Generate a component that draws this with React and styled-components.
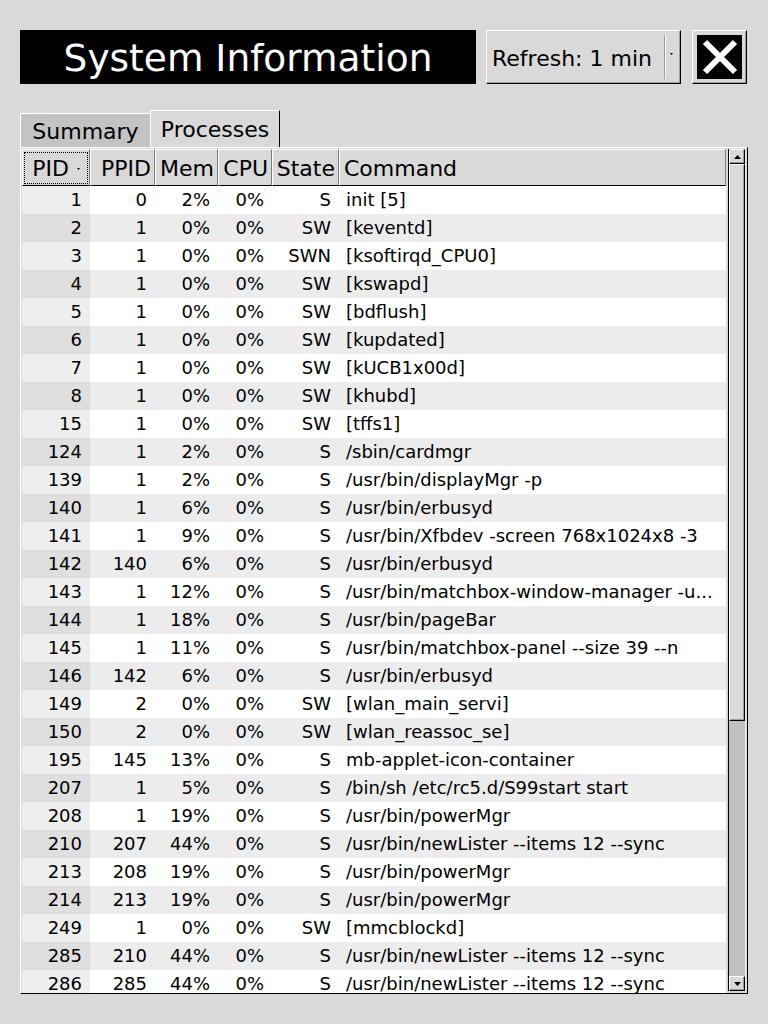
import React from "react";
import styled, { createGlobalStyle } from "styled-components";

const Global = createGlobalStyle`
  html, body { margin: 0; padding: 0; background: #d9d9d9; }
  body { font-family: "DejaVu Sans", "Liberation Sans", sans-serif; color: #000; }
`;

const Page = styled.div`
  width: 768px;
  height: 1024px;
  box-sizing: border-box;
  padding: 30px 20px 0 20px;
  display: flex;
  flex-direction: column;
`;

const TopBar = styled.div`
  display: flex;
  height: 54px;
  gap: 10px;
`;

const Title = styled.div`
  width: 456px;
  background: #000;
  color: #fff;
  font-size: 37.5px;
  display: flex;
  align-items: center;
  justify-content: center;
  padding-top: 2px;
  box-sizing: border-box;
`;

const Bevel = `
  box-sizing: border-box;
  border-style: solid;
  border-width: 1px;
  border-color: #fff #000 #000 #fff;
  box-shadow: inset -1px -1px 0 #9a9a9a;
`;

const Select = styled.div`
  ${Bevel}
  width: 195px;
  background: #d9d9d9;
  display: flex;
  align-items: center;
  font-size: 22px;
  padding-left: 5px;
  position: relative;
`;

const SelectLabel = styled.span`
  flex: 1;
  padding-top: 2px;
`;

const SelectSep = styled.div`
  width: 1px;
  height: 44px;
  background: #9a9a9a;
  border-right: 1px solid #fff;
  margin-right: 4px;
`;

const SelectArrow = styled.svg`
  width: 3px;
  height: 2px;
  margin-right: 7px;
  margin-bottom: 7px;
`;

const CloseBtn = styled.div`
  ${Bevel}
  width: 55px;
  margin-left: 1px;
  background: #d9d9d9;
  padding: 4px 4px 4px 4px;
`;

const CloseInner = styled.div`
  width: 100%;
  height: 100%;
  background: #000;
  display: flex;
  align-items: center;
  justify-content: center;
`;

const TabBar = styled.div`
  margin-top: 26px;
  height: 37px;
  display: flex;
  align-items: flex-end;
`;

const Tab = styled.div`
  box-sizing: border-box;
  width: 130px;
  height: ${(p) => (p.$active ? "37px" : "34px")};
  background: ${(p) => (p.$active ? "#d9d9d9" : "#c3c3c3")};
  border-top: 1px solid #fff;
  border-left: 1px solid #fff;
  border-right: ${(p) => (p.$active ? "1px solid #000" : "none")};
  font-size: 22px;
  display: flex;
  align-items: center;
  justify-content: center;
  padding-bottom: ${(p) => (p.$active ? "0" : "0")};
  padding-top: ${(p) => (p.$active ? "1px" : "1px")};
`;

const Frame = styled.div`
  box-sizing: border-box;
  width: 728px;
  height: 847px;
  border-style: solid;
  border-width: 1px;
  border-color: #fff #000 #000 #fff;
  padding: 1px 1px 0 1px;
  display: flex;
  background: #d9d9d9;
`;

const TableArea = styled.div`
  flex: 1;
  overflow: hidden;
  display: flex;
  flex-direction: column;
  margin-right: 2px;
`;

const cols = "68px 65px 63px 54px 67px 1fr";

const HeaderRow = styled.div`
  display: grid;
  grid-template-columns: ${cols};
  height: 37px;
  flex-shrink: 0;
`;

const HeaderCell = styled.div`
  box-sizing: border-box;
  border-style: solid;
  border-width: 1px;
  border-color: #fff #7a7a7a #000 #fff;
  background: #d9d9d9;
  font-size: 22px;
  display: flex;
  align-items: center;
  justify-content: ${(p) => (p.$left ? "flex-start" : "flex-end")};
  padding: ${(p) => (p.$left ? "1px 0 0 4px" : "1px 3px 0 0")};
  white-space: nowrap;
  position: relative;
`;

const FocusRing = styled.div`
  position: absolute;
  left: 1px;
  top: 2px;
  right: 1px;
  bottom: 1px;
  border: 1px dotted #000;
  pointer-events: none;
`;

const SortDot = styled.svg`
  width: 3px;
  height: 2px;
  margin-left: 8px;
  margin-right: 6px;
  margin-top: 2px;
`;

const Body = styled.div`
  flex: 1;
  overflow: hidden;
`;

const Row = styled.div`
  display: grid;
  grid-template-columns: ${cols};
  height: 28px;
  background: ${(p) => (p.$odd ? "#ececec" : "#ffffff")};
  font-size: 18px;
  line-height: 28px;
`;

const Cell = styled.div`
  text-align: right;
  padding-right: 8px;
  white-space: nowrap;
  background: ${(p) => (p.$sorted ? (p.$odd ? "#dfdfdf" : "#eeeeee") : "transparent")};
`;

const CmdCell = styled.div`
  padding-left: 7px;
  white-space: nowrap;
  overflow: hidden;
  text-overflow: ellipsis;
`;

const Scrollbar = styled.div`
  width: 16px;
  display: flex;
  flex-direction: column;
  border-left: 1px solid #000;
  border-right: 1px solid #eaeaea;
  background: #c0c0c0;
  margin-bottom: 2px;
`;

const ScrollBtn = styled.div`
  ${Bevel}
  height: 15px;
  background: #d9d9d9;
  display: flex;
  align-items: center;
  justify-content: center;
  flex-shrink: 0;
`;

const Thumb = styled.div`
  ${Bevel}
  height: 557px;
  background: #d9d9d9;
  flex-shrink: 0;
`;

const Track = styled.div`
  flex: 1;
`;

const rows = [
  [1, 0, "2%", "0%", "S", "init [5]"],
  [2, 1, "0%", "0%", "SW", "[keventd]"],
  [3, 1, "0%", "0%", "SWN", "[ksoftirqd_CPU0]"],
  [4, 1, "0%", "0%", "SW", "[kswapd]"],
  [5, 1, "0%", "0%", "SW", "[bdflush]"],
  [6, 1, "0%", "0%", "SW", "[kupdated]"],
  [7, 1, "0%", "0%", "SW", "[kUCB1x00d]"],
  [8, 1, "0%", "0%", "SW", "[khubd]"],
  [15, 1, "0%", "0%", "SW", "[tffs1]"],
  [124, 1, "2%", "0%", "S", "/sbin/cardmgr"],
  [139, 1, "2%", "0%", "S", "/usr/bin/displayMgr -p"],
  [140, 1, "6%", "0%", "S", "/usr/bin/erbusyd"],
  [141, 1, "9%", "0%", "S", "/usr/bin/Xfbdev -screen 768x1024x8 -3"],
  [142, 140, "6%", "0%", "S", "/usr/bin/erbusyd"],
  [143, 1, "12%", "0%", "S", "/usr/bin/matchbox-window-manager -u..."],
  [144, 1, "18%", "0%", "S", "/usr/bin/pageBar"],
  [145, 1, "11%", "0%", "S", "/usr/bin/matchbox-panel --size 39 --n"],
  [146, 142, "6%", "0%", "S", "/usr/bin/erbusyd"],
  [149, 2, "0%", "0%", "SW", "[wlan_main_servi]"],
  [150, 2, "0%", "0%", "SW", "[wlan_reassoc_se]"],
  [195, 145, "13%", "0%", "S", "mb-applet-icon-container"],
  [207, 1, "5%", "0%", "S", "/bin/sh /etc/rc5.d/S99start start"],
  [208, 1, "19%", "0%", "S", "/usr/bin/powerMgr"],
  [210, 207, "44%", "0%", "S", "/usr/bin/newLister --items 12 --sync"],
  [213, 208, "19%", "0%", "S", "/usr/bin/powerMgr"],
  [214, 213, "19%", "0%", "S", "/usr/bin/powerMgr"],
  [249, 1, "0%", "0%", "SW", "[mmcblockd]"],
  [285, 210, "44%", "0%", "S", "/usr/bin/newLister --items 12 --sync"],
  [286, 285, "44%", "0%", "S", "/usr/bin/newLister --items 12 --sync"],
];

export default function App() {
  return (
    <>
      <Global />
      <Page>
        <TopBar>
          <Title>System Information</Title>
          <Select>
            <SelectLabel>Refresh: 1 min</SelectLabel>
            <SelectSep />
            <SelectArrow viewBox="0 0 3 2">
              <path d="M0 0h3L1.5 2z" fill="#000" />
            </SelectArrow>
          </Select>
          <CloseBtn>
            <CloseInner>
              <svg width="36" height="36" viewBox="0 0 36 36">
                <path d="M3 3L33 33M33 3L3 33" stroke="#fff" strokeWidth="6" />
              </svg>
            </CloseInner>
          </CloseBtn>
        </TopBar>
        <TabBar>
          <Tab>Summary</Tab>
          <Tab $active>Processes</Tab>
        </TabBar>
        <Frame>
          <TableArea>
            <HeaderRow>
              <HeaderCell>
                <FocusRing />
                PID
                <SortDot viewBox="0 0 3 2">
                  <path d="M0 0h3L1.5 2z" fill="#000" />
                </SortDot>
              </HeaderCell>
              <HeaderCell>PPID</HeaderCell>
              <HeaderCell>Mem</HeaderCell>
              <HeaderCell>CPU</HeaderCell>
              <HeaderCell>State</HeaderCell>
              <HeaderCell $left>Command</HeaderCell>
            </HeaderRow>
            <Body>
              {rows.map((r, i) => {
                const odd = i % 2 === 1;
                return (
                  <Row key={r[0]} $odd={odd}>
                    <Cell $sorted $odd={odd}>{r[0]}</Cell>
                    <Cell>{r[1]}</Cell>
                    <Cell>{r[2]}</Cell>
                    <Cell>{r[3]}</Cell>
                    <Cell>{r[4]}</Cell>
                    <CmdCell>{r[5]}</CmdCell>
                  </Row>
                );
              })}
            </Body>
          </TableArea>
          <Scrollbar>
            <ScrollBtn>
              <svg width="7" height="4" viewBox="0 0 7 4">
                <path d="M3.5 0L7 4H0z" fill="#000" />
              </svg>
            </ScrollBtn>
            <Thumb />
            <Track />
            <ScrollBtn>
              <svg width="7" height="4" viewBox="0 0 7 4">
                <path d="M0 0h7L3.5 4z" fill="#000" />
              </svg>
            </ScrollBtn>
          </Scrollbar>
        </Frame>
      </Page>
    </>
  );
}
